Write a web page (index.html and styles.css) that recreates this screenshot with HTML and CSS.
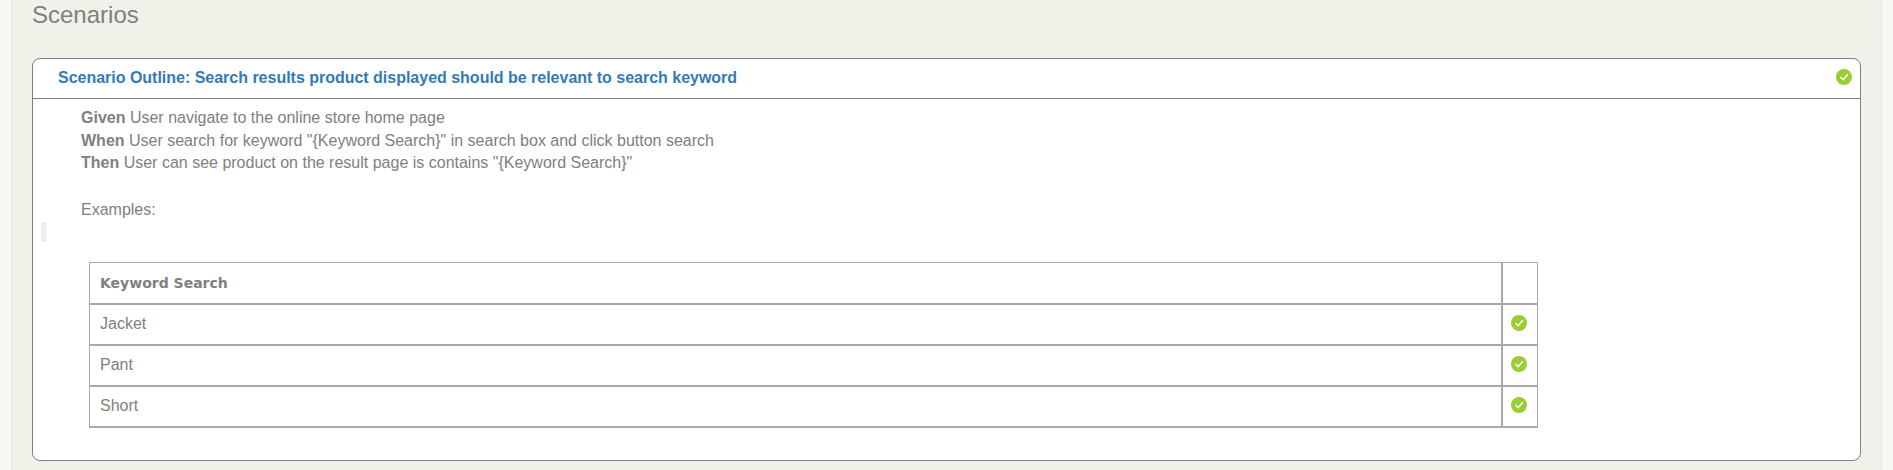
FILE: index.html
```html
<!DOCTYPE html>
<html lang="en">
<head>
<meta charset="utf-8">
<title>Scenarios</title>
<link rel="stylesheet" href="styles.css">
</head>
<body>
<svg class="defs" width="0" height="0"><symbol id="check" viewBox="0 0 16 16"><circle cx="8" cy="8" r="8" fill="#9acd32"/><path d="M4.4 8 7.2 10.7 11.8 5.2" fill="none" stroke="#fff" stroke-width="1.5"/></symbol></svg>
<main class="panel">
  <h3 class="heading">Scenarios</h3>
  <section class="card">
    <header class="card-header">
      <a class="title">Scenario Outline: Search results product displayed should be relevant to search keyword</a>
      <svg class="icon"><use href="#check"/></svg>
    </header>
    <div class="steps">
      <div class="step"><b>Given</b> User navigate to the online store home page</div>
      <div class="step when"><b>When</b> User search for keyword "{Keyword Search}" in search box and click button search</div>
      <div class="step"><b>Then</b> User can see product on the result page is contains "{Keyword Search}"</div>
      <div class="examples">Examples:</div>
    </div>
    <div class="marker"></div>
    <table class="table">
      <tr><th>Keyword Search</th><th class="status"></th></tr>
      <tr><td>Jacket</td><td class="status"><svg class="icon"><use href="#check"/></svg></td></tr>
      <tr><td>Pant</td><td class="status"><svg class="icon"><use href="#check"/></svg></td></tr>
      <tr><td>Short</td><td class="status"><svg class="icon"><use href="#check"/></svg></td></tr>
    </table>
  </section>
</main>
</body>
</html>
```
FILE: styles.css
```css
* { box-sizing: border-box; }
body {
  margin: 0;
  padding: 0 11px;
  height: 470px;
  overflow: hidden;
  background: #f7f8f4;
  color: #808080;
  font: 16px/22px "Liberation Sans", Arial, sans-serif;
}
.defs { display: block; }
.panel {
  height: 470px;
  padding: 0 20px;
  background: #f0f1e8;
  border: solid #e4e5df;
  border-width: 0 1px;
}
.heading { margin: 0; height: 58px; font-size: 24px; font-weight: 400; line-height: 30px; }
.card {
  width: 1829px;
  height: 403px;
  background: #fff;
  border: 1px solid #808080;
  border-radius: 8px;
}
.card-header {
  display: flex;
  justify-content: space-between;
  height: 40px;
  padding: 8px 8px 0 25px;
  border-bottom: 1px solid #808080;
}
.title { color: #337ab7; font-weight: 700; letter-spacing: -0.013px; }
.card-header .icon { margin-top: 2px; }
.icon { display: block; width: 16px; height: 16px; }
.steps { height: 123px; padding: 8px 0 0 48px; }
.step { height: 22px; }
.when { height: 23px; }
.step:first-child { height: 23px; }
.when { height: 22px; }
.examples { margin-top: 25px; }
.marker { width: 5px; height: 20px; margin-left: 8px; background: #eee; }
.table {
  width: 1449px;
  margin: 20px 0 0 56px;
  border: 0;
  border-bottom: 1px solid #a9a9a9;
  border-spacing: 0;
  table-layout: fixed;
}
.table th, .table td {
  height: 41px;
  padding: 0 10px 2px;
  border: 1px solid #a9a9a9;
  text-align: left;
  vertical-align: middle;
}
.table tr + tr > * { border-top-width: 0; padding-top: 1px; }
.table tr > :first-child { border-right-width: 1px; }
.table th { height: 42px; padding-bottom: 0; font: 700 14px/22px "DejaVu Sans", Verdana, sans-serif; }
.table tr:nth-child(n+2) > * { border-top-width: 1px; padding-top: 0; }
.table .status { width: 36px; padding: 0 8px 4px; }
```
